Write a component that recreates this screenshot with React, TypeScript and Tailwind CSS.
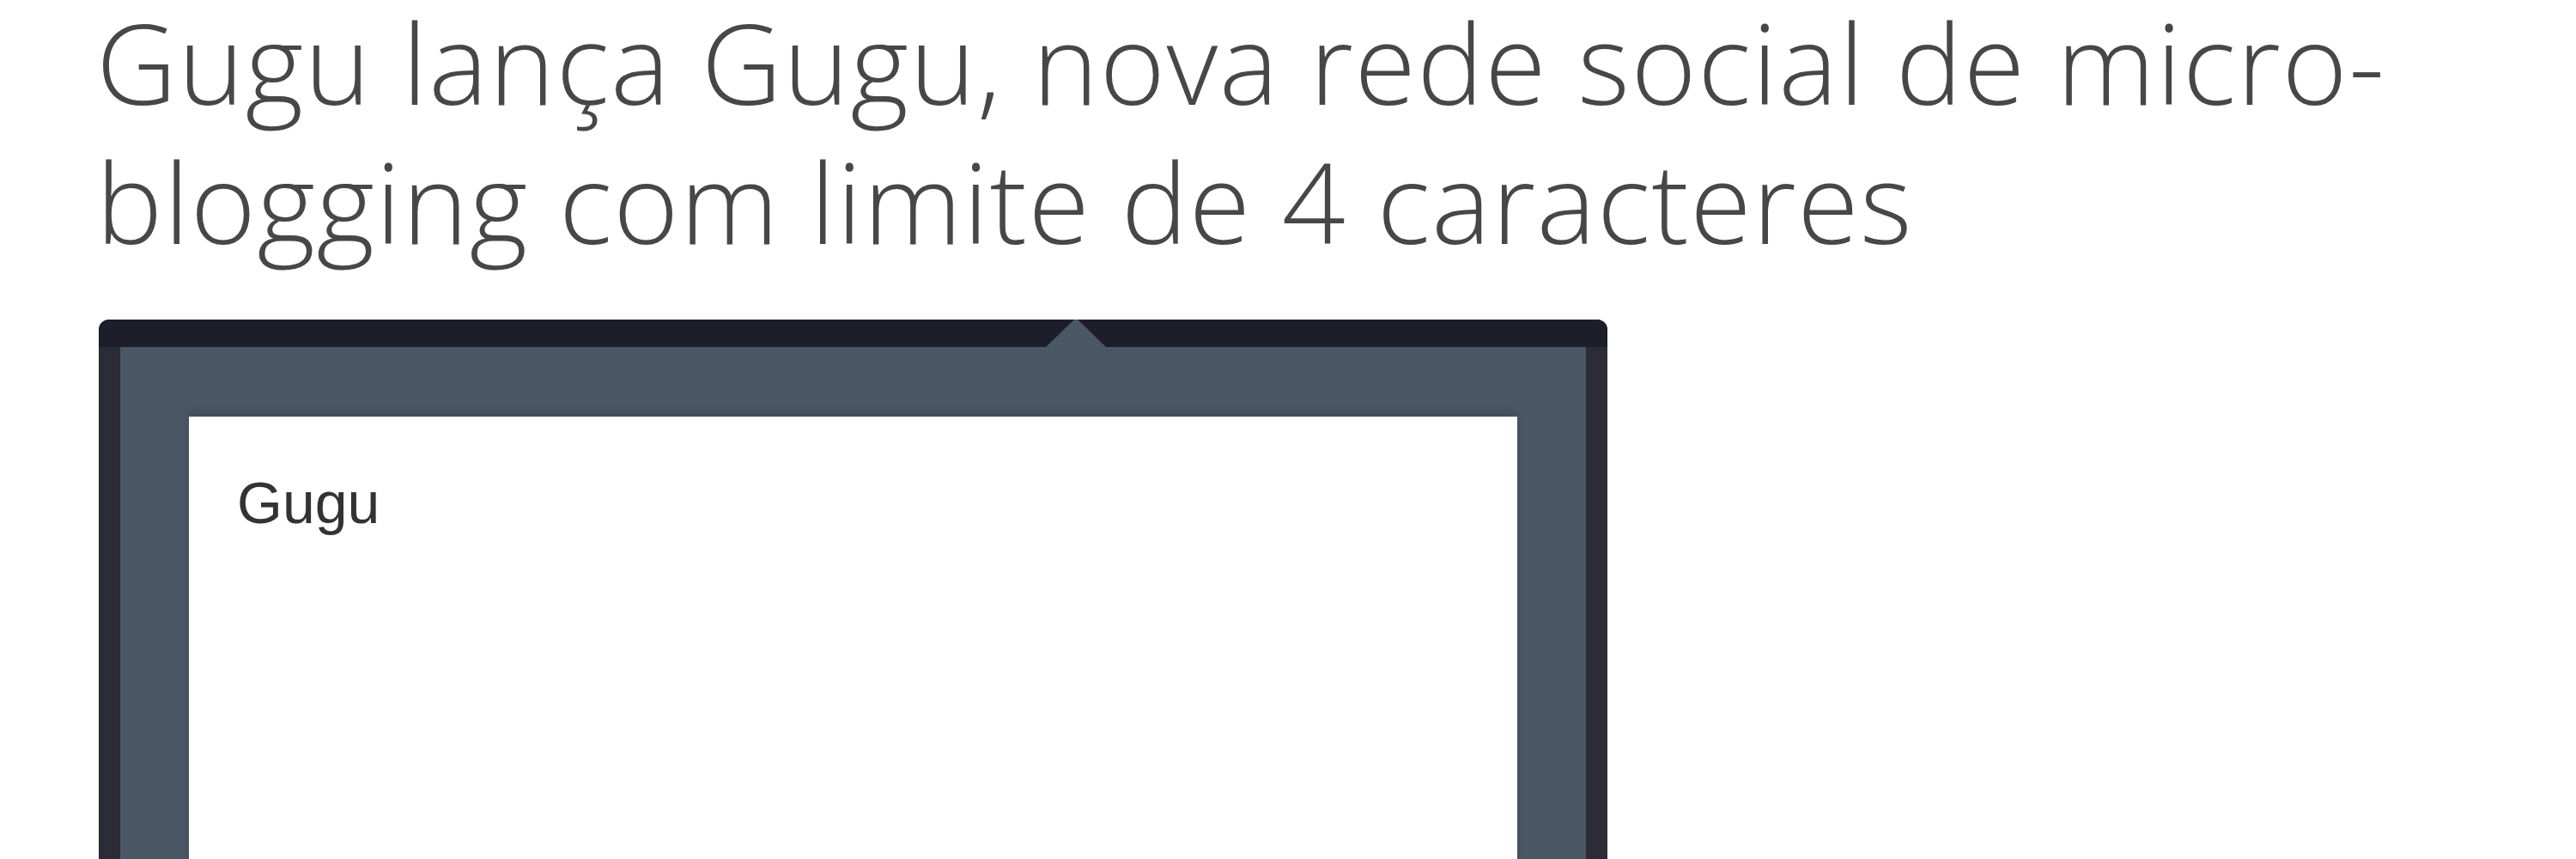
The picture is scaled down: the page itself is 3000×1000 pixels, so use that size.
export default function App() {
  return (
    <div className="min-h-screen overflow-hidden bg-white pl-[112px]">
      <h1
        className="mt-[-9px] text-[130px] font-light leading-[162px] tracking-[1.5px] text-[#474747]"
        style={{ fontFamily: '"Open Sans", "Noto Sans", sans-serif' }}
      >
        Gugu lança Gugu, nova rede social de micro-
        <br />
        blogging com limite de 4 caracteres
      </h1>

      <div className="mt-[57px] ml-[3px] w-[1757px] overflow-hidden rounded-t-[12px] bg-[#2b2c35]">
        <div className="relative h-[32px] bg-[#1d1e2a]">
          <div className="absolute bottom-0 left-[1103px] h-0 w-0 border-x-[35px] border-b-[34px] border-x-transparent border-b-[#4a5764]" />
        </div>
        <div className="mx-[25px] bg-[#4a5764] px-[80px] pt-[81px]">
          <div className="h-[700px] bg-white pl-[56px] pt-[62px] shadow-[0_-6px_10px_rgba(0,0,0,0.12)]">
            <p
              className="text-[68px] leading-[76px] text-[#333]"
              style={{ fontFamily: '"Liberation Sans", Arial, sans-serif' }}
            >
              Gugu
            </p>
          </div>
        </div>
      </div>
    </div>
  );
}
